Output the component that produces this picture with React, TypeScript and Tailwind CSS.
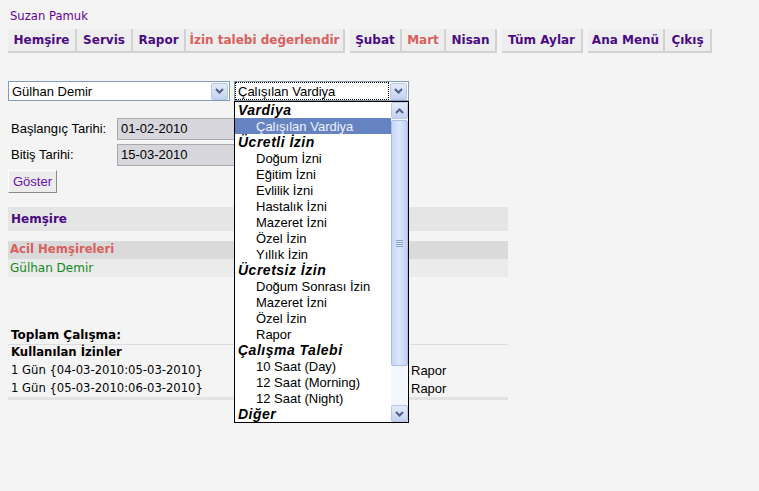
import React from "react";

const purple = "text-[#4b0b86]";

const navGroups = [
  [
    { label: "Hemşire", w: "w-[69px]" },
    { label: "Servis", w: "w-[56px]" },
    { label: "Rapor", w: "w-[53px]" },
    { label: "İzin talebi değerlendir", w: "w-[159px]", active: true },
  ],
  [
    { label: "Şubat", w: "w-[52px]" },
    { label: "Mart", w: "w-[44px]", active: true },
    { label: "Nisan", w: "w-[51px]" },
  ],
  [{ label: "Tüm Aylar", w: "w-[81px]" }],
  [
    { label: "Ana Menü", w: "w-[77px]" },
    { label: "Çıkış", w: "w-[47px]" },
  ],
];

type Opt = { label: string; group?: boolean; selected?: boolean };

const options: Opt[] = [
  { label: "Vardiya", group: true },
  { label: "Çalışılan Vardiya", selected: true },
  { label: "Ücretli İzin", group: true },
  { label: "Doğum İzni" },
  { label: "Eğitim İzni" },
  { label: "Evlilik İzni" },
  { label: "Hastalık İzni" },
  { label: "Mazeret İzni" },
  { label: "Özel İzin" },
  { label: "Yıllık İzin" },
  { label: "Ücretsiz İzin", group: true },
  { label: "Doğum Sonrası İzin" },
  { label: "Mazeret İzni" },
  { label: "Özel İzin" },
  { label: "Rapor" },
  { label: "Çalışma Talebi", group: true },
  { label: "10 Saat (Day)" },
  { label: "12 Saat (Morning)" },
  { label: "12 Saat (Night)" },
  { label: "Diğer", group: true },
];

function Chevron({ up }: { up?: boolean }) {
  return (
    <svg width="9" height="6" viewBox="0 0 9 6">
      <path
        d={up ? "M1 5 L4.5 1.5 L8 5" : "M1 1 L4.5 4.5 L8 1"}
        fill="none"
        stroke="#4d6185"
        strokeWidth="2"
      />
    </svg>
  );
}

function ArrowBox({ up }: { up?: boolean }) {
  return (
    <div className="flex h-[17px] w-[17px] items-center justify-center rounded-[2px] border border-[#b7c7e8] bg-gradient-to-b from-[#e4ebfa] to-[#c4d2f0]">
      <Chevron up={up} />
    </div>
  );
}

function Select({ value, w, focused }: { value: string; w: string; focused?: boolean }) {
  return (
    <div className={`flex h-[20px] ${w} items-center justify-between border border-[#7f9db9] bg-white pl-[1px] pr-[1px]`}>
      <span
        className={`flex h-[16px] flex-1 items-center px-[2px] text-[13px] leading-none text-black ${
          focused ? "outline-1 outline-dotted outline-black" : ""
        }`}
      >
        {value}
      </span>
      <div className="ml-[2px]">
        <ArrowBox />
      </div>
    </div>
  );
}

export default function App() {
  return (
    <div className="relative min-h-[491px] w-full bg-[#f4f4f4] font-['DejaVu_Sans',Verdana,sans-serif]">
      <div className="pl-[8px] pt-[9px]">
        <div className="h-[15px] pl-[2px] text-[11.6px] leading-[15px] text-[#660099]">Suzan Pamuk</div>

        <nav className="mt-[5px] flex gap-[5px]">
          {navGroups.map((g, i) => (
            <div key={i} className="flex">
              {g.map((b) => (
                <div
                  key={b.label}
                  className={`flex h-[24px] ${b.w} items-center justify-center border-r-2 border-b-2 border-[#d2d2d2] bg-[#eeeeee] text-[12px] font-bold ${
                    b.active ? "text-[#d9605c]" : purple
                  }`}
                >
                  {b.label}
                </div>
              ))}
            </div>
          ))}
        </nav>

        <div className="mt-[28px] flex gap-[4px] font-['Liberation_Sans',Arial,sans-serif]">
          <Select value="Gülhan Demir" w="w-[222px]" />
          <Select value="Çalışılan Vardiya" w="w-[175px]" focused />
        </div>

        <div className="mt-[17px] flex flex-col gap-[4px] font-['Liberation_Sans',Arial,sans-serif] text-[13px] text-black">
          <div className="flex items-center">
            <span className="w-[109px] pl-[3px]">Başlangıç Tarihi:</span>
            <div className="flex h-[22px] w-[160px] items-center border border-[#a9a9a9] bg-[#d6d6dc] pl-[3px]">01-02-2010</div>
          </div>
          <div className="flex items-center">
            <span className="w-[109px] pl-[3px]">Bitiş Tarihi:</span>
            <div className="flex h-[22px] w-[160px] items-center border border-[#a9a9a9] bg-[#d6d6dc] pl-[3px]">15-03-2010</div>
          </div>
          <div>
            <button className="flex h-[23px] w-[49px] items-center justify-center border border-t-white border-l-white border-r-[#8a8a8a] border-b-[#8a8a8a] bg-[#ececec] text-[13px] text-[#6a11b0]">
              Göster
            </button>
          </div>
        </div>

        <div className="mt-[14px] w-[500px]">
          <div className={`flex h-[24px] items-center bg-[#e5e5e5] pl-[3px] text-[12px] font-bold ${purple}`}>Hemşire</div>
          <div className="mt-[10px] flex h-[18px] items-center bg-[#dadada] pl-[2px] text-[11.7px] font-bold text-[#d9605c]">
            Acil Hemşireleri
          </div>
          <div className="flex h-[18px] items-center bg-[#ebebeb] pl-[2px] text-[12px] text-[#11881a]">Gülhan Demir</div>

          <div className="mt-[48px] flex h-[20px] items-center border-b border-[#dcdcdc] pl-[3px] text-[12px] font-bold text-black">
            Toplam Çalışma:
          </div>
          <div className="flex h-[16px] items-center pl-[3px] text-[11.7px] font-bold text-black">Kullanılan İzinler</div>
          {["1 Gün {04-03-2010:05-03-2010}", "1 Gün {05-03-2010:06-03-2010}"].map((t) => (
            <div key={t} className="grid h-[18px] grid-cols-[400px_1fr] items-center text-black">
              <span className="pl-[3px] text-[11.6px]">{t}</span>
              <span className="pl-[3px] font-['Liberation_Sans',Arial,sans-serif] text-[13px]">Rapor</span>
            </div>
          ))}
          <div className="h-[3px] bg-[#e2e2e2]" />
        </div>
      </div>

      {/* open dropdown list */}
      <div className="absolute left-[234px] top-[101px] flex h-[322px] w-[175px] border border-black bg-white font-['Liberation_Sans',Arial,sans-serif] text-[13px]">
        <div className="flex-1 overflow-hidden">
          {options.map((o, i) => (
            <div
              key={i}
              className={`flex h-[16px] items-center leading-none ${
                o.group
                  ? "pl-[3px] text-[14px] font-bold italic tracking-[0.5px] text-black"
                  : o.selected
                  ? "bg-[#6583c0] pl-[21px] text-[#eef3ff]"
                  : "pl-[21px] text-black"
              }`}
            >
              {o.label}
            </div>
          ))}
        </div>
        <div className="flex w-[17px] flex-col bg-[#f3f6fd]">
          <ArrowBox up />
          <div className="mt-[1px] flex h-[246px] items-center justify-center rounded-[2px] border border-[#a8bde8] bg-gradient-to-r from-[#c9d8f8] via-[#dde7fb] to-[#bfd0f5]">
            <div className="flex flex-col gap-[1px]">
              <div className="h-px w-[7px] bg-[#8ea3cf]" />
              <div className="h-px w-[7px] bg-[#8ea3cf]" />
              <div className="h-px w-[7px] bg-[#8ea3cf]" />
              <div className="h-px w-[7px] bg-[#8ea3cf]" />
            </div>
          </div>
          <div className="flex-1" />
          <ArrowBox />
        </div>
      </div>
    </div>
  );
}
